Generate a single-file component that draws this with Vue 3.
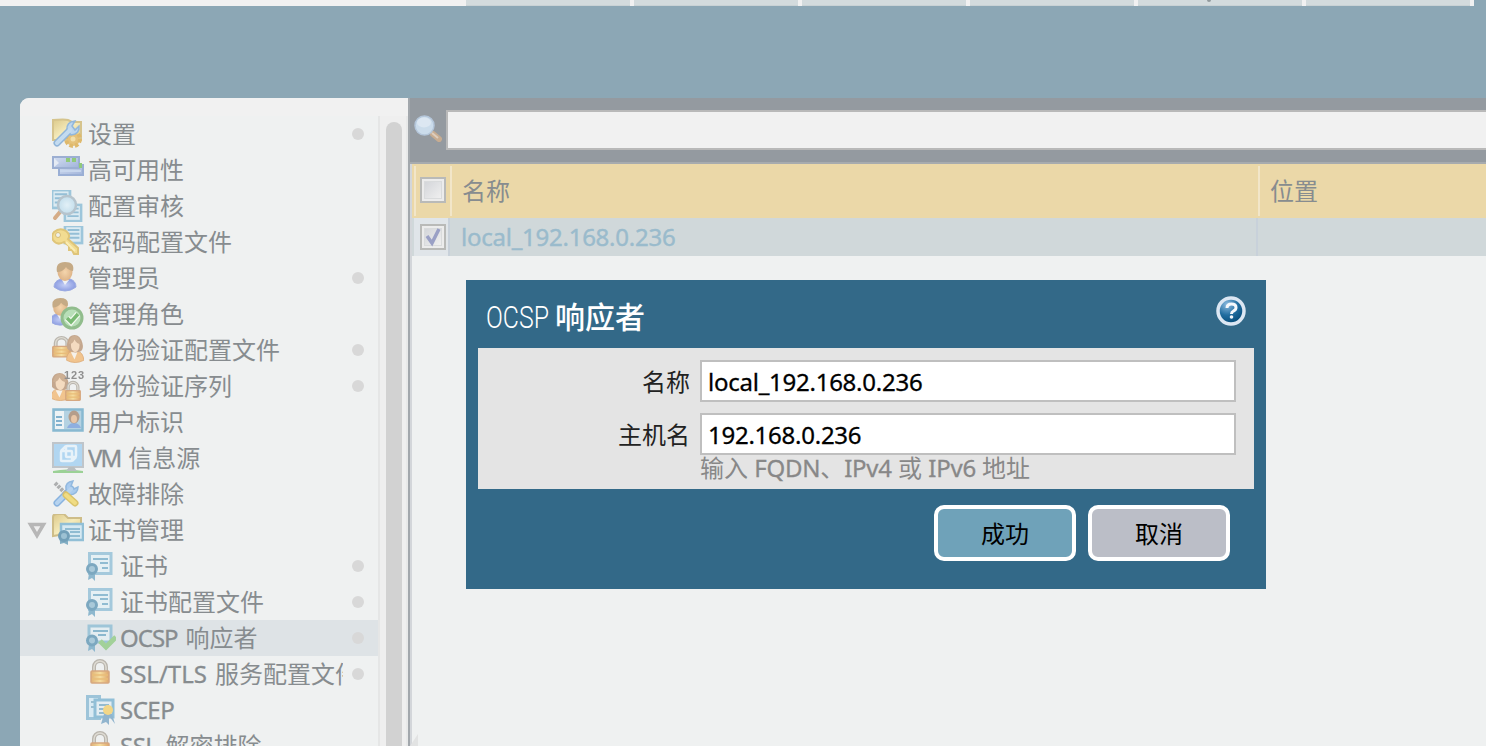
<script setup>
const tabs = [1, 2, 3, 4, 5, 6]

const items = [
  { icon: 'settings', cjk: '设置', dot: true },
  { icon: 'ha', cjk: '高可用性' },
  { icon: 'audit', cjk: '配置审核' },
  { icon: 'key', cjk: '密码配置文件' },
  { icon: 'admin', cjk: '管理员', dot: true },
  { icon: 'role', cjk: '管理角色' },
  { icon: 'authprofile', cjk: '身份验证配置文件', dot: true },
  { icon: 'authseq', cjk: '身份验证序列', dot: true },
  { icon: 'userid', cjk: '用户标识' },
  { icon: 'vm', latin: 'VM', fit: 'tight', cjk: '信息源' },
  { icon: 'tools', cjk: '故障排除' },
  { icon: 'certfolder', cjk: '证书管理', open: true },
  { icon: 'cert', cjk: '证书', dot: true, child: true },
  { icon: 'cert', cjk: '证书配置文件', dot: true, child: true },
  { icon: 'ocsp', latin: 'OCSP', fit: 'snug', cjk: '响应者', dot: true, child: true, selected: true },
  { icon: 'lock', latin: 'SSL/TLS', fit: 'loose', cjk: '服务配置文件', dot: true, child: true },
  { icon: 'scep', latin: 'SCEP', child: true },
  { icon: 'lock', latin: 'SSL', cjk: '解密排除', child: true },
]
</script>

<template>
  <div class="page">
    <svg class="defs" width="0" height="0" aria-hidden="true">
      <defs>
        <linearGradient id="gold" x1="0" y1="0" x2="1" y2="1">
          <stop offset="0" stop-color="#dcc98a" /><stop offset=".5" stop-color="#f5ebbb" /><stop offset="1" stop-color="#ddc47b" />
        </linearGradient>
        <linearGradient id="lockfill" x1="0" y1="0" x2="1" y2="0">
          <stop offset="0" stop-color="#dfb176" /><stop offset=".5" stop-color="#f6dea0" /><stop offset="1" stop-color="#dda56c" />
        </linearGradient>
        <linearGradient id="server" x1="0" y1="0" x2="1" y2="1">
          <stop offset="0" stop-color="#d3def0" /><stop offset="1" stop-color="#a0b3da" />
        </linearGradient>
        <radialGradient id="skin"><stop offset="0" stop-color="#f4d5ad" /><stop offset="1" stop-color="#deb488" /></radialGradient>
        <radialGradient id="shirt"><stop offset="0" stop-color="#c5cff5" /><stop offset="1" stop-color="#8d9ee2" /></radialGradient>
        <radialGradient id="lens"><stop offset="0" stop-color="#e2f0f7" /><stop offset="1" stop-color="#c3deec" /></radialGradient>
        <radialGradient id="helpfill" cx=".35" cy=".25" r=".75">
          <stop offset="0" stop-color="#8dbbe0" /><stop offset=".55" stop-color="#216da0" /><stop offset="1" stop-color="#064c79" />
        </radialGradient>
        <linearGradient id="boxfill" x1="0" y1="0" x2="1" y2="1">
          <stop offset="0" stop-color="#d3d5d9" /><stop offset="1" stop-color="#f0f0f0" />
        </linearGradient>

        <symbol id="i-cert" viewBox="0 0 32 32">
          <rect x="5.500" y="3.500" width="21.500" height="20" fill="#e5f0f4" stroke="#a4c9dc" stroke-width="3" />
          <path d="M9 9h15M16 13h8M18 18h6" stroke="#90bcd2" stroke-width="2" />
          <path d="M5 23l-1 7 4-2 3 3v-8z" fill="#8eb8ce" />
          <circle cx="8" cy="19" r="4.500" fill="#a9c9d9" stroke="#7ca8c0" stroke-width="3" />
        </symbol>
        <symbol id="i-lock" viewBox="0 0 32 32">
          <path d="M10 15V9a6 6 0 0 1 12 0v6" fill="none" stroke="#b9b5ad" stroke-width="4" />
          <path d="M10 14V9a6 6 0 0 1 12 0v5" fill="none" stroke="#dedbd3" stroke-width="1.500" />
          <rect x="7" y="13" width="18" height="12" rx="1" fill="url(#lockfill)" stroke="#d6a880" stroke-width="1.500" />
          <path d="M8 17h16M8 21h16" stroke="#e9bd78" stroke-width="1.500" />
        </symbol>
        <symbol id="i-admin" viewBox="0 0 32 32">
          <path d="M2 25q0-6 7-8h9q6 2 6 8-5 4-11 4T2 25z" fill="url(#shirt)" stroke="#9baae1" />
          <path d="M10 18l3 5 4-5z" fill="#eef1f5" />
          <ellipse cx="13" cy="10" rx="7.500" ry="9" fill="url(#skin)" />
          <path d="M5 10Q3 0 13 0q10 0 8 9-5-1-7-4-3 5-9 5z" fill="#c5aa85" />
        </symbol>
        <symbol id="i-woman" viewBox="0 0 32 32">
          <path d="M5 29q0-9 8-10h7q8 1 9 10-12 5-24 0z" fill="#f1c48e" stroke="#dcab78" />
          <path d="M11 20l5 8 4-8z" fill="#f5f1ea" />
          <path d="M8 18Q4 15 6 9 8 1 16 1t11 9q2 6-2 9-9 3-17-1z" fill="#c4a78e" />
          <ellipse cx="17" cy="12" rx="6" ry="8" fill="#f4dbc0" />
          <path d="M8 11q6 0 8-5 3 5 9 5-2-9-9-9-7 1-8 9z" fill="#cdb094" />
        </symbol>
        <symbol id="i-doc" viewBox="0 0 32 32">
          <rect x="3" y="3" width="26" height="26" fill="#dcebf2" stroke="#9dc6db" stroke-width="4" />
          <path d="M7 9h18M7 15h18M7 21h18" stroke="#94bfd6" stroke-width="3" />
        </symbol>

        <symbol id="i-settings" viewBox="0 0 32 32">
          <path d="M1 2q12-1 15 0l4 2h9v18H1z" fill="url(#gold)" stroke="#d6c48d" stroke-width="2" />
          <circle cx="21" cy="21" r="7" fill="#e5c27b" stroke="#dfb96c" stroke-width="4" stroke-dasharray="3.500 2" />
          <circle cx="21" cy="21" r="2.500" fill="#f2dfa9" />
          <path d="M5 25L18 12" stroke="#91b5d9" stroke-width="7" stroke-linecap="round" />
          <path d="M15 12q-1-8 8-9l-3 5 3 4 4-4q1 8-8 9z" fill="#bcd6ee" stroke="#91b7dc" stroke-width="1.500" />
          <path d="M5 25L18 12" stroke="#c3dbf0" stroke-width="4" stroke-linecap="round" />
        </symbol>
        <symbol id="i-ha" viewBox="0 0 32 32">
          <rect x="7" y="11" width="24" height="10" fill="url(#server)" stroke="#9aafd5" stroke-width="2" />
          <rect x="1" y="3" width="26" height="11" fill="url(#server)" stroke="#9cafd2" stroke-width="2" />
          <path d="M2 4l5 5-5 4z" fill="#e5ebf4" /><path d="M8 17h21" stroke="#c7d6ed" stroke-width="2" />
          <path d="M14 4h4v4h-4zM20 4h4v4h-4zM27 9h3v5h-3z" fill="#90ca7a" />
        </symbol>
        <symbol id="i-audit" viewBox="0 0 32 32">
          <use href="#i-doc" x="-2" y="-2" width="22" height="22" /><use href="#i-doc" x="11" y="13" width="20" height="20" />
          <path d="M8 22l-5 6" stroke="#d5ac87" stroke-width="4" stroke-linecap="round" />
          <circle cx="15" cy="15" r="9" fill="url(#lens)" stroke="#b6c4cd" stroke-width="2.500" />
        </symbol>
        <symbol id="i-key" viewBox="0 0 32 32">
          <use href="#i-doc" x="11" y="-2" width="21" height="21" />
          <path d="M2 6Q8 1 14 5q5 4 2 8l10 9v6h-4l-2-4h-3v-4l-5-4Q5 20 1 14q-2-4 1-8z" fill="#f2dc91" stroke="#dfc579" stroke-width="2" />
          <circle cx="6" cy="9" r="2.500" fill="#eef0e9" stroke="#d8bd75" stroke-width="1" />
          <path d="M14 16l9 9" stroke="#faedb5" stroke-width="2" />
        </symbol>
        <symbol id="i-role" viewBox="0 0 32 32">
          <use href="#i-admin" x="-4" y="0" width="30" height="30" />
          <circle cx="20" cy="20" r="10" fill="#b8dfb8" stroke="#91bd8d" stroke-width="3" />
          <path d="M15 20l4 4 7-8" fill="none" stroke="#f2f9ef" stroke-width="6" /><path d="M15 20l4 4 7-8" fill="none" stroke="#79ba73" stroke-width="3.500" />
        </symbol>
        <symbol id="i-authprofile" viewBox="0 0 32 32">
          <svg x="-6" y="1" width="31" height="28" viewBox="0 0 32 32" preserveAspectRatio="none"><use href="#i-lock" width="32" height="32" /></svg>
          <svg x="11" y="0" width="23" height="29" viewBox="0 0 32 32" preserveAspectRatio="none"><use href="#i-woman" width="32" height="32" /></svg>
        </symbol>
        <symbol id="i-authseq" viewBox="0 0 32 32">
          <svg x="-5" y="2" width="25" height="29" viewBox="0 0 32 32" preserveAspectRatio="none"><use href="#i-woman" width="32" height="32" /></svg>
          <use href="#i-lock" x="8" y="10" width="26" height="26" />
          <text x="12" y="9" class="numbers" textLength="20">123</text>
        </symbol>
        <symbol id="i-userid" viewBox="0 0 32 32">
          <rect x="1.500" y="3.500" width="29" height="21" fill="#b4d2e2" stroke="#88b9d1" stroke-width="2.500" />
          <path d="M3 5h9v18H3z" fill="#edf3f5" />
          <path d="M4 11h6M4 15h6M4 19h6" stroke="#81b1ce" stroke-width="2" />
          <path d="M15 22q2-5 7-5t7 5z" fill="#8eafe0" /><ellipse cx="22" cy="11" rx="5.500" ry="6.500" fill="#b49d8b" /><ellipse cx="22" cy="13" rx="3" ry="4" fill="#e9c7a8" />
        </symbol>
        <symbol id="i-vm" viewBox="0 0 32 32">
          <rect x="1" y="1" width="30" height="24" fill="#b1d6f1" stroke="#bfc5ca" stroke-width="2" />
          <path d="M1 29q14-3 30 0v2H1z" fill="#9bd196" /><path d="M14 29l3-4h5l3 4z" fill="#b8bec0" />
          <g fill="none" stroke="#e7f2f9" stroke-width="2.500"><rect x="9" y="9" width="11" height="10" rx="1" /><rect x="14" y="4" width="10" height="11" rx="1" /><path d="M9 9l5-5M20 19l4-4" /></g>
        </symbol>
        <symbol id="i-tools" viewBox="0 0 32 32">
          <path d="M5 25L19 11" stroke="#89b3df" stroke-width="7" stroke-linecap="round" />
          <path d="M14 11q-1-7 7-8l-2 5 3 3 4-2q0 7-8 8z" fill="#a9cbee" stroke="#92b9df" stroke-width="1.500" />
          <path d="M5 25L19 11" stroke="#b6d3ef" stroke-width="4" stroke-linecap="round" />
          <path d="M3 5l11 11" stroke="#adafb0" stroke-width="4" stroke-dasharray="3 1" /><path d="M14 17l9 8" stroke="#dac36b" stroke-width="7" stroke-linecap="round" /><path d="M14 17l9 8" stroke="#f0dc83" stroke-width="4" stroke-linecap="round" />
        </symbol>
        <symbol id="i-certfolder" viewBox="0 0 32 32">
          <path d="M1 22V3q0-3 4-3h7l4 4h13v17H7z" fill="url(#gold)" stroke="#cebd88" stroke-width="2" />
          <rect x="9" y="10" width="22" height="16" fill="#d6e9f2" stroke="#91bfd6" stroke-width="2.500" />
          <path d="M13 15h15M18 18h10M18 22h10" stroke="#90bcd2" stroke-width="2" /><path d="M8 24v6l4-1 4 2v-7z" fill="#82aec4" />
          <circle cx="12" cy="22" r="4.500" fill="#9dc1d3" stroke="#729fb8" stroke-width="3" />
        </symbol>
        <symbol id="i-ocsp" viewBox="0 0 32 32">
          <path d="M5 4h22v16H5z" fill="#e4edf1" stroke="#9ec5d8" stroke-width="3" /><path d="M9 9h15M14 13h8" stroke="#8cb8ce" stroke-width="2" />
          <path d="M5 22l-1 7 4-2 3 3v-8z" fill="#8eb8ce" /><circle cx="8" cy="18.500" r="4.500" fill="#a9c9d9" stroke="#7ca8c0" stroke-width="3" />
          <path d="M16 19l6 6 10-10" fill="none" stroke="#a2d199" stroke-width="5" />
        </symbol>
        <symbol id="i-scep" viewBox="0 0 32 32">
          <path d="M3.500 2.500h12v22h-12z" fill="#d9eaf3" stroke="#9dc4d9" stroke-width="3" /><path d="M7 8h5M7 13h5" stroke="#9bbed0" stroke-width="2" />
          <rect x="11" y="6" width="18" height="17" fill="#e3edf2" stroke="#91bfd7" stroke-width="3" /><path d="M15 11h10M15 15h7M15 19h7" stroke="#94bbcf" stroke-width="2" />
          <path d="M20 20l-3 10 5-2 3 3v-9l6 8-3-10z" fill="#91b5ce" /><circle cx="24" cy="16" r="5" fill="#f2d687" />
        </symbol>
      </defs>
    </svg>

    <div class="tabbar"><i v-for="tab in tabs" :key="tab" class="tab" :class="{ marked: tab === 5 }"></i></div>

    <div class="workspace">
      <aside class="sidebar">
        <div class="side-top"></div>
        <div class="side-body">
          <nav class="tree">
            <div v-for="(item, i) in items" :key="i" class="row" :class="{ child: item.child, selected: item.selected }">
              <svg v-if="item.open" class="arrow" viewBox="0 0 20 18"><path d="M3.500 2.500h13L10 13.500z" fill="#eee" stroke="#b7b7b7" stroke-width="3.500" /></svg>
              <svg class="icon"><use :href="'#i-' + item.icon" /></svg>
              <span class="label"><span v-if="item.latin" class="latin" :class="[item.fit, { spaced: item.cjk }]">{{ item.latin }}</span>{{ item.cjk }}</span>
              <i v-if="item.dot" class="dot"></i>
            </div>
          </nav>
          <div class="scroll"><i class="thumb"></i></div>
        </div>
      </aside>

      <main class="content">
        <div class="toolbar">
          <svg class="search" viewBox="0 0 32 32">
            <path d="M19 23l6 5" stroke="#c7ac91" stroke-width="6" stroke-linecap="round" /><path d="M18 22l6 5" stroke="#ddcdbd" stroke-width="2" />
            <circle cx="10.500" cy="14.500" r="9.500" fill="#cbdceb" stroke="#b4c6da" stroke-width="1.500" /><ellipse cx="10" cy="11.500" rx="7" ry="5" fill="#dce7f2" />
          </svg>
          <div class="query"></div>
        </div>
        <div class="grid">
          <div class="head">
            <div class="hcheck"><svg class="box" viewBox="0 0 26 26"><rect x="1" y="1" width="24" height="24" fill="#ececec" stroke="#b9bab8" stroke-width="2" /><rect x="4.500" y="4.500" width="17" height="17" fill="url(#boxfill)" stroke="#d9dbdc" /></svg></div>
            <div class="hname">名称</div>
            <div class="hloc">位置</div>
          </div>
          <div class="record">
            <div class="rcheck"><svg class="box" viewBox="0 0 26 26"><rect x="1" y="1" width="24" height="24" fill="#ececec" stroke="#b9bab8" stroke-width="2" /><rect x="4.500" y="4.500" width="17" height="17" fill="url(#boxfill)" stroke="#d9dbdc" /><path d="M7 12l5 7 7-14" fill="none" stroke="#9aa0c5" stroke-width="3.500" /></svg></div>
            <div class="rname">local_192.168.0.236</div>
            <div></div>
          </div>
        </div>
        <i class="resize"></i>
      </main>
    </div>

    <section class="dialog">
      <header class="title">
        <svg class="title-latin" width="64" height="36"><text x="0" y="27" textLength="63" lengthAdjust="spacingAndGlyphs">OCSP</text></svg>
        <span class="title-cjk">响应者</span>
        <svg class="help" viewBox="0 0 30 30"><circle cx="15" cy="15" r="13" fill="url(#helpfill)" stroke="#dce7f3" stroke-width="3.500" /><path d="M11 12q0-4 4.500-4t4.500 3.500q0 2.500-2.500 3.500-2 1-2 3" fill="none" stroke="#f5f8fc" stroke-width="3" /><circle cx="15.500" cy="21" r="1.800" fill="#f5f8fc" /></svg>
      </header>
      <div class="form">
        <label class="field"><span>名称</span><b class="input">local_192.168.0.236</b></label>
        <label class="field"><span>主机名</span><b class="input">192.168.0.236</b></label>
        <p class="hint">输入 <span class="latin">FQDN</span>、<span class="latin">IPv4</span> 或 <span class="latin">IPv6</span> 地址</p>
      </div>
      <footer class="actions"><button class="btn ok">成功</button><button class="btn">取消</button></footer>
    </section>
  </div>
</template>

<style>
body { margin: 0; overflow: hidden; }
</style>

<style scoped>
.page { position: relative; width: 1486px; height: 746px; overflow: hidden; background: #8ca7b5; font: 24px/36px "Noto Sans", "Noto Sans CJK SC", sans-serif; color: #878c8f; box-sizing: border-box; }
.page * { box-sizing: border-box; }
.defs { position: absolute; }
.numbers { font: bold 11px "Liberation Sans", sans-serif; fill: #8f8f8f; }
.tabbar { display: flex; gap: 4px; width: 1474px; height: 6px; padding-left: 466px; background: #f1f1f1; }
.tab { width: 164px; height: 6px; background: #d3dbdd; border-bottom: 1px solid #c9d2d5; }
.tab.marked::before { content: ""; display: block; width: 4px; height: 2px; margin-left: 69px; background: #929a9d; border-radius: 0 0 2px 2px; }
.workspace { display: flex; height: 648px; margin: 92px 0 0 20px; }
.sidebar { width: 388px; flex: none; background: #eff1f1; border-top-left-radius: 9px; overflow: hidden; }
.side-top { height: 18px; background: #f1f1f1; }
.side-body { display: flex; height: 630px; }
.tree { width: 358px; overflow: hidden; }
.row { display: flex; align-items: center; position: relative; height: 36px; padding-left: 32px; }
.row.child { padding-left: 64px; }
.row.selected { background: #dee3e6; }
.arrow { position: absolute; left: 7px; top: 10px; width: 20px; height: 18px; }
.icon { width: 32px; height: 32px; flex: none; filter: blur(.35px); }
.label { width: 255px; margin-left: 4px; white-space: nowrap; overflow: hidden; height: 36px; line-height: 36px; }
.child .label { width: 223px; }
.latin { letter-spacing: -.5px; -webkit-text-stroke: .3px currentColor; }
.latin.tight { letter-spacing: -2px; }
.latin.snug { letter-spacing: -1px; }
.latin.loose { letter-spacing: 0; }
.spaced { margin-right: 8px; }
.dot { position: absolute; left: 332px; top: 12px; width: 12px; height: 12px; border-radius: 50%; background: #d8d8d8; }
.scroll { width: 30px; padding: 6px 0 0 6px; background: #efefef; border-left: 2px solid #e5e6e6; border-right: 2px solid #e8e9e9; }
.thumb { display: block; width: 16px; height: 640px; border-radius: 8px; background: #d2d2d2; }
.content { position: relative; flex: 1; background: #eff1f1; border-left: 2px solid #a2a7ac; }
.resize { position: absolute; left: 0; bottom: 0; border-left: 8px solid transparent; border-bottom: 12px solid #e2e3e3; }
.toolbar { display: flex; height: 66px; padding: 12px 0 0 4px; background: #949aa0; border-bottom: 2px solid #a7abae; }
.search { width: 32px; height: 32px; margin: 1px 0 0; flex: none; filter: blur(.3px); }
.query { flex: 1; height: 40px; background: #f1f1f1; border: 2px solid #b9b9b9; border-right: 0; }
.grid { height: 582px; border-left: 2px solid #d3d6da; }
.head { display: grid; grid-template-columns: 38px 808px 1fr; height: 54px; padding: 2px 0 2px 2px; background: #ebd8a8; line-height: 50px; }
.hcheck { padding: 11px 0 0 4px; border-left: 2px solid #f2e6c9; border-right: 2px solid #f2e6c9; }
.hname { padding-left: 10px; border-right: 2px solid #f2e6c9; }
.hloc { padding-left: 10px; }
.record { display: grid; grid-template-columns: 36px 808px 1fr; height: 38px; padding-left: 2px; background: #d0d8da; line-height: 38px; }
.rcheck { padding: 6px; background: #e0e5e9; border-right: 2px solid #c8d1da; }
.rname { padding-left: 11px; color: #9abbcc; border-right: 2px solid #c8d1da; letter-spacing: -.25px; -webkit-text-stroke: .4px currentColor; }
.box { display: block; width: 26px; height: 26px; }
.dialog { position: absolute; left: 466px; top: 280px; width: 800px; height: 309px; padding: 0 12px; background: #336988; }
.title { display: flex; height: 68px; padding: 16px 8px 0; }
.title-latin { margin-top: 5px; }
.title-latin text { font: 300 32px Roboto, sans-serif; fill: #fff; }
.title-cjk { height: 38px; margin-left: 5px; font: 500 30px/38px "Noto Sans CJK SC", sans-serif; color: #fff; }
.help { width: 30px; height: 30px; margin-left: auto; }
.form { height: 141px; padding: 12px 18px 0 0; background: #e4e4e4; color: #222; }
.field { display: grid; grid-template-columns: 212px 536px; column-gap: 10px; height: 42px; margin-bottom: 11px; text-align: right; line-height: 44px; }
.input { height: 42px; padding-left: 6px; text-align: left; font-weight: 400; line-height: 40px; color: #000; background: #fff; border: 2px solid #bfbfbf; letter-spacing: -.25px; -webkit-text-stroke: .3px currentColor; }
.hint { margin: -16px 0 0 222px; color: #888; line-height: 36px; }
.hint .latin { letter-spacing: -.25px; }
.actions { display: flex; justify-content: flex-end; gap: 12px; padding: 16px 24px 0 0; }
.btn { width: 142px; height: 56px; padding: 0; border: 4px solid #fff; border-radius: 10px; background: #bbbec7; font: 24px/46px "Noto Sans CJK SC", sans-serif; color: #000; }
.btn.ok { background: #6fa2b9; }
</style>
